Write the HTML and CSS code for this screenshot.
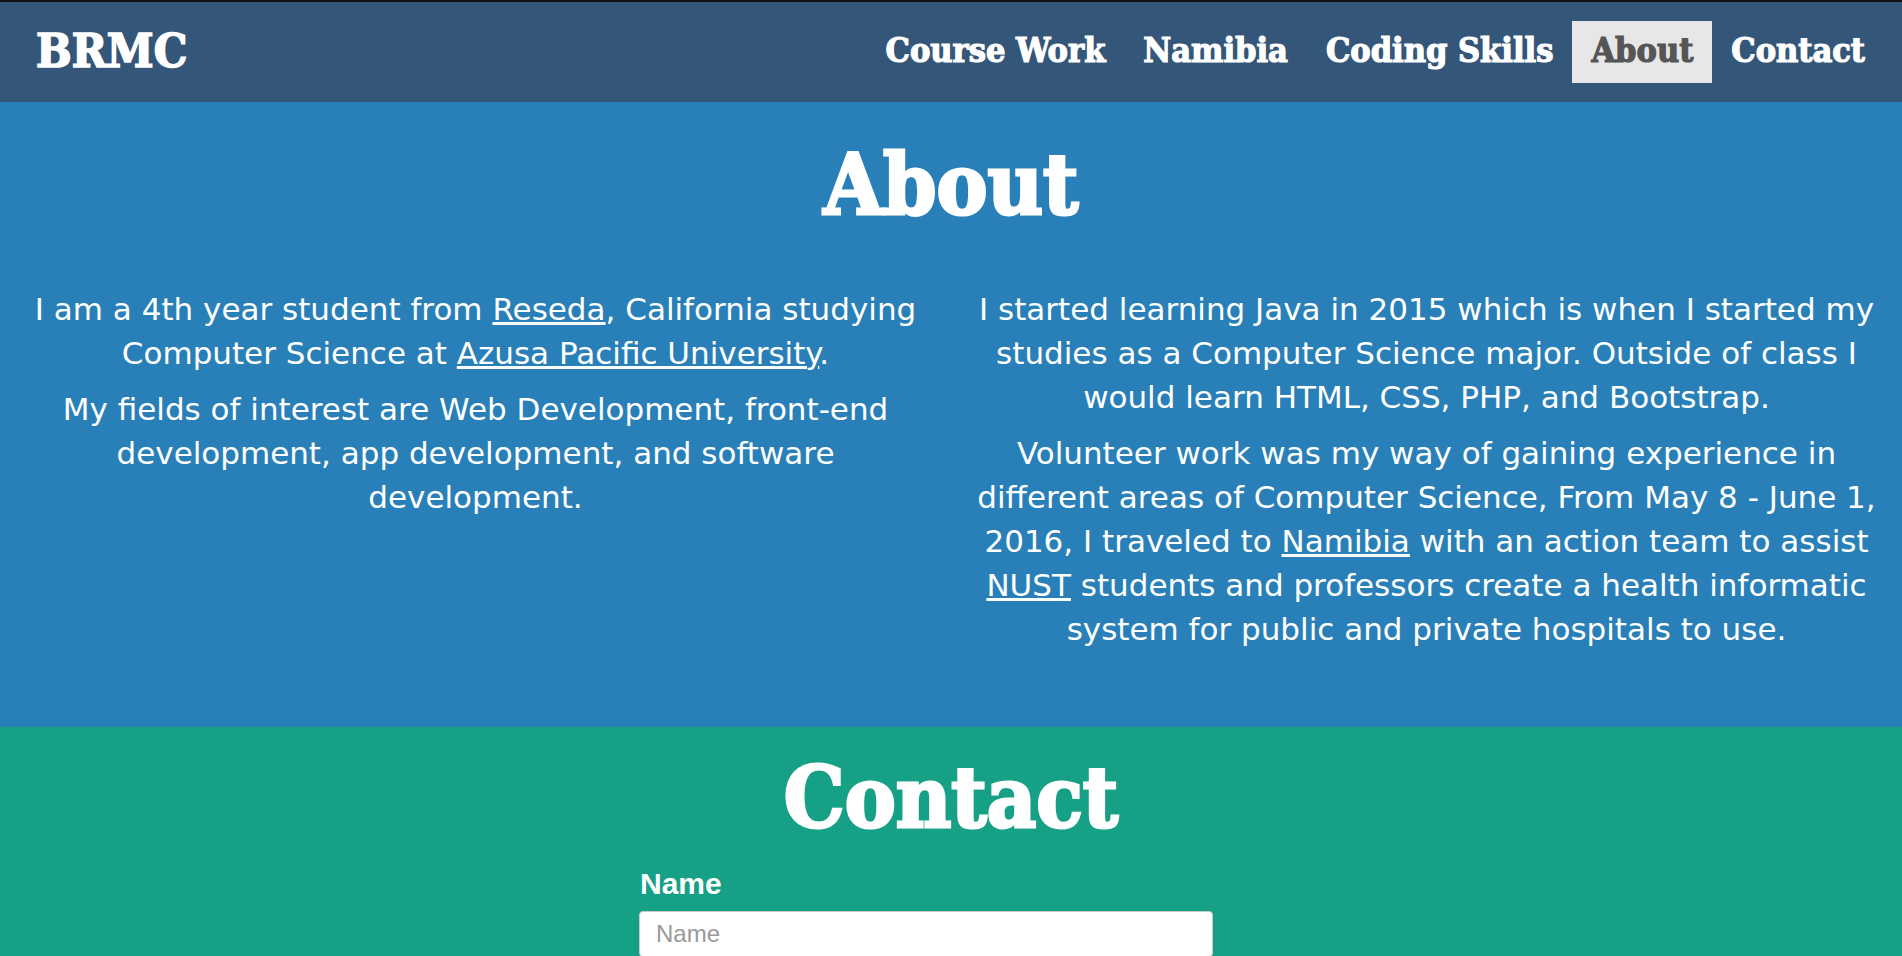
FILE: index.html
```html
<!DOCTYPE html>
<html lang="en">
<head>
<meta charset="utf-8">
<title>BRMC</title>
<link rel="stylesheet" href="styles.css">
</head>
<body>
<nav class="navbar">
  <a class="brand" href="#">BRMC</a>
  <ul class="nav-links">
    <li><a href="#">Course Work</a></li>
    <li><a href="#">Namibia</a></li>
    <li><a href="#">Coding Skills</a></li>
    <li><a class="active" href="#">About</a></li>
    <li><a href="#">Contact</a></li>
  </ul>
</nav>
<section class="about">
  <h1 class="section-title">About</h1>
  <div class="row">
    <div class="col">
      <p>I am a 4th year student from <a href="#">Reseda</a>, California studying Computer Science at <a href="#">Azusa Pacific University</a>.</p>
      <p>My fields of interest are Web Development, front-end development, app development, and software development.</p>
    </div>
    <div class="col">
      <p>I started learning Java in 2015 which is when I started my studies as a Computer Science major. Outside of class I would learn HTML, CSS, PHP, and Bootstrap.</p>
      <p>Volunteer work was my way of gaining experience in different areas of Computer Science, From May 8 - June 1, 2016, I traveled to <a href="#">Namibia</a> with an action team to assist <a href="#">NUST</a> students and professors create a health informatic system for public and private hospitals to use.</p>
    </div>
  </div>
</section>
<section class="contact">
  <h1 class="section-title">Contact</h1>
  <form class="contact-form">
    <label class="form-label" for="name">Name</label>
    <input class="form-input" id="name" type="text" placeholder="Name">
  </form>
</section>
</body>
</html>
```
FILE: styles.css
```css
* { box-sizing: border-box; }
html, body { margin: 0; padding: 0; }
body {
  background: #16a085;
  color: #fff;
  font-family: "DejaVu Sans", sans-serif;
}

.navbar {
  display: flex;
  align-items: center;
  justify-content: space-between;
  height: 102px;
  border-top: 2px solid #111;
  background: #345679;
  padding: 0 18px 0 36px;
}
.brand {
  font-family: "DejaVu Serif", serif;
  font-stretch: condensed;
  font-weight: 700;
  font-size: 47px;
  line-height: 48px;
  color: #fff;
  text-decoration: none;
  margin-bottom: 3px;
  -webkit-text-stroke: 1.6px currentColor;
}
.nav-links {
  display: flex;
  list-style: none;
  margin: 0;
  padding: 0;
}
.nav-links a {
  display: block;
  height: 62px;
  line-height: 58px;
  padding: 0 19px 4px;
  font-family: "DejaVu Serif", serif;
  font-stretch: condensed;
  font-weight: 700;
  font-size: 34px;
  color: #fff;
  text-decoration: none;
  -webkit-text-stroke: 1.2px currentColor;
}
.nav-links a.active {
  background: #e7e7e7;
  color: #555;
}

.section-title {
  margin: 0;
  text-align: center;
  font-family: "DejaVu Serif", serif;
  font-stretch: condensed;
  font-weight: 700;
  font-size: 85px;
  line-height: 1.1;
  -webkit-text-stroke: 3px currentColor;
}

.about {
  background: #2980b9;
  padding: 36px 0 64px;
}
.about .section-title { margin-bottom: 55px; }
.row {
  display: flex;
}
.col {
  flex: 1 1 50%;
  padding: 0 15px;
  text-align: center;
}
.col p {
  margin: 0 0 12px;
  font-size: 31px;
  line-height: 44px;
}
.col a { color: #fff; text-decoration: underline; }

.contact {
  background: #16a085;
  padding: 24px 0 40px;
}
.contact .section-title { margin-bottom: 22px; }
.contact-form {
  width: 574px;
  margin-left: 639px;
}
.form-label {
  display: block;
  font-family: "Liberation Sans", Arial, sans-serif;
  font-weight: 700;
  font-size: 30px;
  line-height: 36px;
  margin: 0 0 9px 1px;
}
.form-input {
  display: block;
  width: 100%;
  height: 46px;
  padding: 0 16px;
  border: 1px solid #ccc;
  border-radius: 4px;
  background: #fff;
  font-family: "Liberation Sans", Arial, sans-serif;
  font-size: 24px;
  color: #555;
}
.form-input::placeholder { color: #999; }
```
